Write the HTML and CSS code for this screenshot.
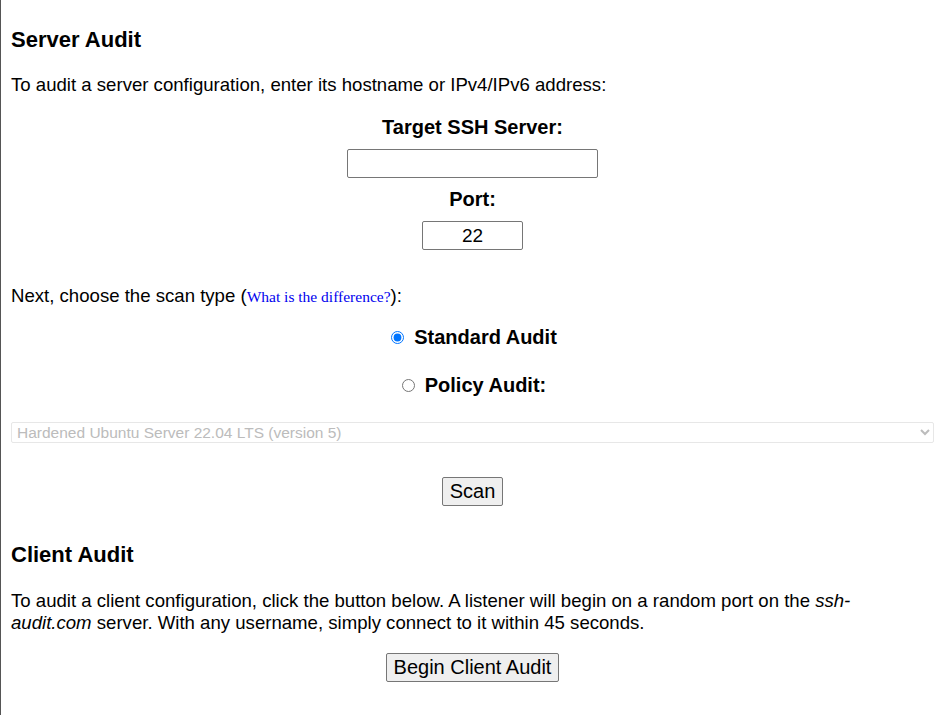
FILE: index.html
```html
<!DOCTYPE html>
<html lang="en">
<head>
    <meta charset="UTF-8">
    <meta name="viewport" content="width=device-width, initial-scale=1.0">
    <title>SSH Audit</title>
    <link rel="stylesheet" href="styles.css">
</head>
<body>
    <div class="page">
        <!-- Server audit -->
        <h2 class="section-title">Server Audit</h2>
        <p class="intro">To audit a server configuration, enter its hostname or IPv4/IPv6 address:</p>

        <form id="serverForm" class="audit-form">
            <label class="field-label" for="server">Target SSH Server:</label>
            <input type="text" id="server" name="server" class="server-input">

            <label class="field-label port-label" for="port">Port:</label>
            <input type="text" id="port" name="port" class="port-input" value="22">

            <p class="scan-type">Next, choose the scan type (<a href="#" class="diff-link">What is the difference?</a>):</p>

            <div class="radio-row standard-row">
                <input type="radio" id="standard" name="audit_type" checked>
                <label for="standard">Standard Audit</label>
            </div>
            <div class="radio-row policy-row">
                <input type="radio" id="policy" name="audit_type">
                <label for="policy">Policy Audit:</label>
            </div>

            <select class="policy-select" disabled>
                <option>Hardened Ubuntu Server 22.04 LTS (version 5)</option>
            </select>

            <button type="submit" class="button scan-button">Scan</button>
        </form>

        <!-- Client audit -->
        <h2 class="section-title client-title">Client Audit</h2>
        <p class="client-text">To audit a client configuration, click the button below. A listener will begin on a random port on the <em>ssh-audit.com</em> server. With any username, simply connect to it within 45 seconds.</p>
        <div class="center">
            <button type="button" class="button client-button">Begin Client Audit</button>
        </div>
    </div>
</body>
</html>
```

FILE: styles.css
```css
/* General */
body {
    margin: 0;
    font-family: "Liberation Sans", Arial, sans-serif;
    font-size: 18.6px;
    color: #000000;
    background-color: #ffffff;
}

.page {
    border-left: 1px solid #555555;
    min-height: 100vh;
    box-sizing: border-box;
    padding: 27px 9px 0 10px;
}

.section-title {
    margin: 0;
    font-size: 22px;
    line-height: 26px;
}

.intro {
    margin: 21px 0 0;
    line-height: 21px;
}

/* Server form */
.audit-form {
    display: flex;
    flex-direction: column;
    align-items: center;
}

.field-label {
    margin-top: 21px;
    font-size: 20px;
    font-weight: bold;
    line-height: 23px;
}

.port-label {
    margin-top: 10px;
}

.server-input,
.port-input {
    margin-top: 10px;
    box-sizing: border-box;
    border: 1px solid #767676;
    border-radius: 2px;
    font-family: "Liberation Sans", Arial, sans-serif;
    font-size: 19px;
    padding: 1px 2px;
}

.server-input {
    width: 251px;
    height: 29px;
}

.port-input {
    width: 101px;
    height: 29px;
    text-align: center;
}

.scan-type {
    align-self: stretch;
    margin: 35px 0 0;
    line-height: 21px;
}

.diff-link {
    font-family: "Liberation Serif", "Times New Roman", serif;
    font-size: 15.5px;
    color: #0000ee;
    text-decoration: none;
}

.radio-row {
    display: flex;
    align-items: center;
    font-size: 20px;
    font-weight: bold;
    line-height: 23px;
}

.radio-row input {
    margin: 0 10px 0 0;
    width: 13px;
    height: 13px;
}

.standard-row {
    margin-top: 19px;
    padding-left: 3px;
}

.policy-row {
    margin-top: 25px;
    padding-left: 3px;
}

.policy-select {
    align-self: stretch;
    margin-top: 25px;
    height: 21px;
    font-family: "Liberation Sans", Arial, sans-serif;
    font-size: 15.5px;
    color: #a0a0a0;
    background-color: #ffffff;
    border: 1px solid #dddddd;
    border-radius: 2px;
    padding: 0 1px;
}

/* Buttons */
.button {
    font-family: "Liberation Sans", Arial, sans-serif;
    font-size: 20px;
    color: #000000;
    background-color: #efefef;
    border: 1px solid #767676;
    border-radius: 2px;
    padding: 1px 6px;
    height: 29px;
    box-sizing: border-box;
}

.scan-button {
    margin-top: 34px;
    width: 61px;
}

/* Client audit */
.client-title {
    margin-top: 36px;
}

.client-text {
    margin: 22px 0 0;
    padding-right: 8px;
    line-height: 22px;
}

.center {
    display: flex;
    justify-content: center;
    margin-top: 19px;
}

.client-button {
    width: 173px;
}
```
